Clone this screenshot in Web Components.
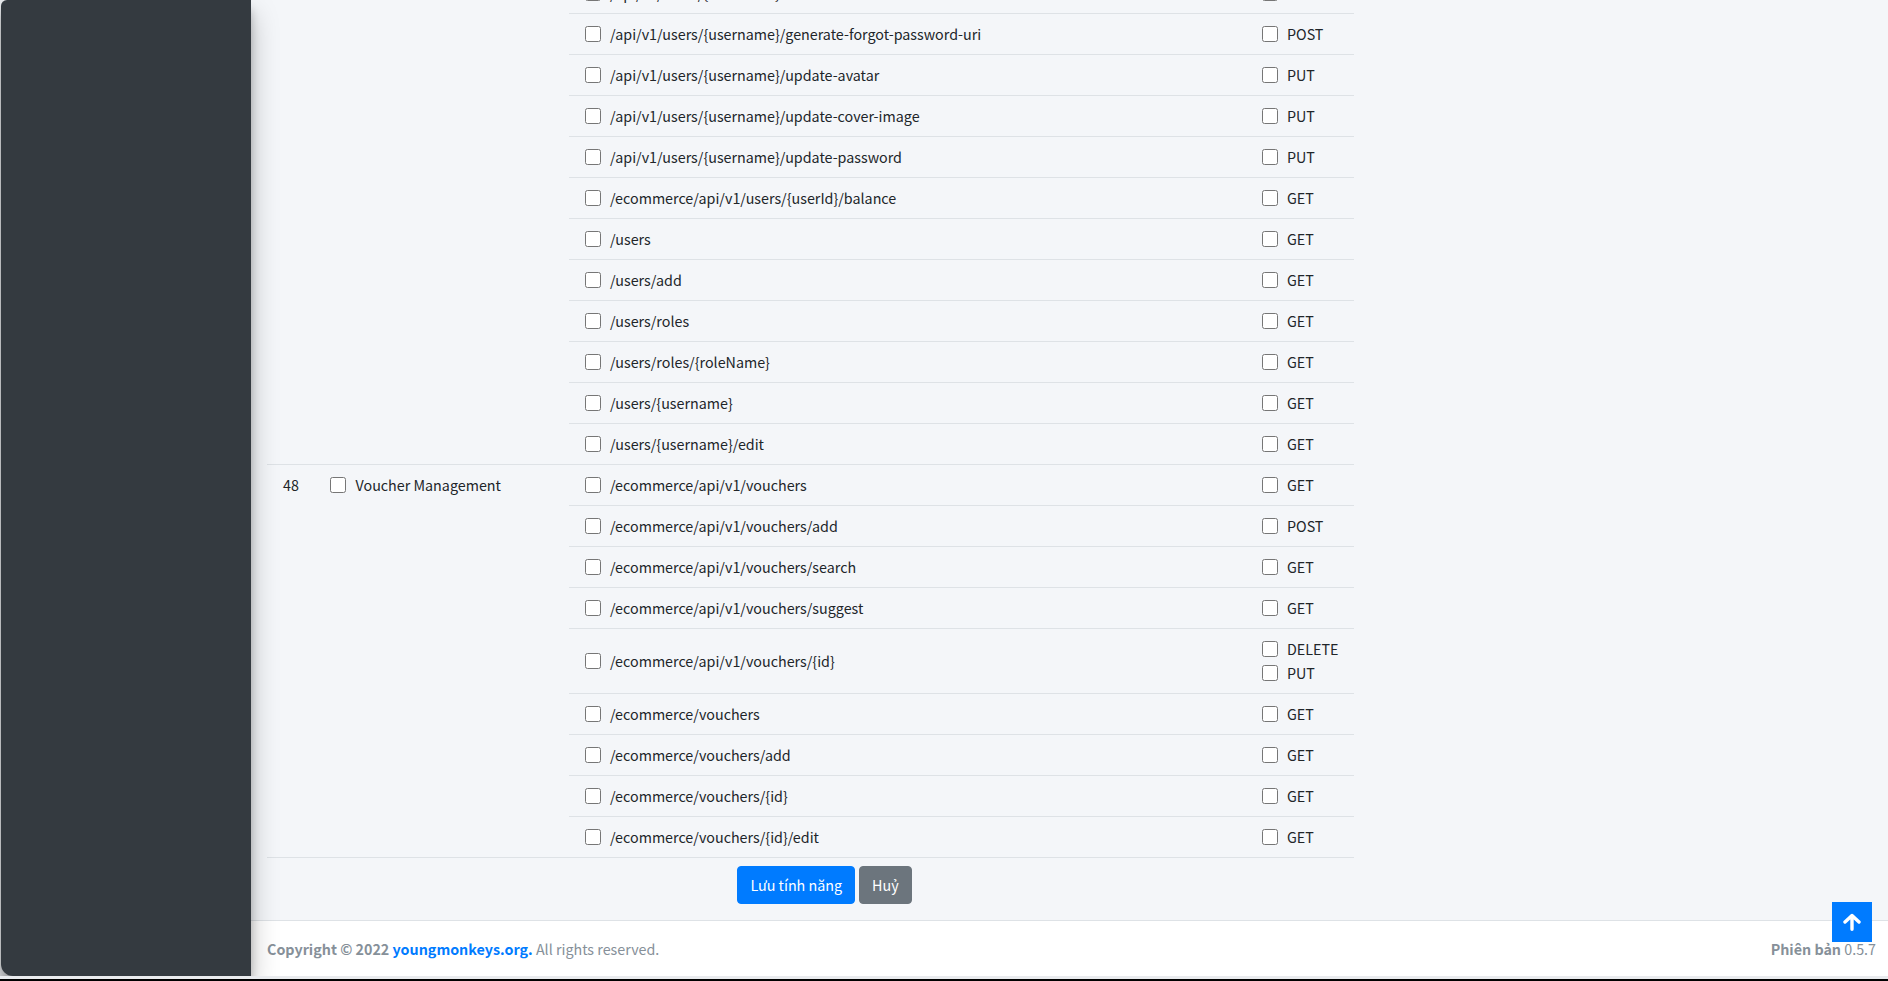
<!DOCTYPE html>
<html>
<head>
<meta charset="utf-8">
<title>Features</title>
<style>
  html, body { margin: 0; height: 100%; overflow: hidden; background: #000; }
  body { font-family: "Noto Sans CJK SC", "Noto Sans", sans-serif; font-size: 14.3px; color: #212529; }
</style>
</head>
<body>
<admin-shell>
  <feature-table></feature-table>
  <form-actions slot="actions"></form-actions>
  <page-footer slot="footer"></page-footer>
</admin-shell>
<back-to-top></back-to-top>

<script>
const checkboxCss = `
  .box {
    flex: none;
    width: 16px;
    height: 16px;
    box-sizing: border-box;
    background: #fff;
    border: 1px solid #767676;
    border-radius: 2.5px;
  }
`;

class AdminShell extends HTMLElement {
  constructor() {
    super();
    this.attachShadow({mode: 'open'});
    this.shadowRoot.innerHTML = `
      <style>
        :host {
          display: block;
          box-sizing: border-box;
          height: 979px;
          padding-bottom: 3px;
          background: #e9ebee;
        }
        .frame {
          display: flex;
          height: 100%;
          overflow: hidden;
          background: #e9ebee;
        }
        .sidebar {
          flex: none;
          width: 250px;
          margin-left: 1px;
          background: #343a40;
          border-bottom-left-radius: 12px;
          border-top-left-radius: 6px;
          box-shadow: 0 14px 28px rgba(0,0,0,.25), 0 10px 10px rgba(0,0,0,.22);
          z-index: 2;
        }
        .main {
          flex: 1;
          min-width: 0;
          display: flex;
          flex-direction: column;
          background: #f4f6f9;
        }
        .content {
          flex: 1;
          min-height: 0;
          overflow: hidden;
          padding: 0 16px;
          display: flex;
          flex-direction: column;
        }
      </style>
      <div class="frame">
        <div class="sidebar"></div>
        <div class="main">
          <div class="content">
            <slot></slot>
            <slot name="actions"></slot>
          </div>
          <slot name="footer"></slot>
        </div>
      </div>
    `;
  }
}

class FeatureTable extends HTMLElement {
  constructor() {
    super();
    this.attachShadow({mode: 'open'});
    this.shadowRoot.innerHTML = `
      <style>
        :host {
          display: block;
          width: 1087px;
          margin-top: -27px;
        }
      </style>
      <slot></slot>
    `;
  }
}

class FeatureRow extends HTMLElement {
  constructor() {
    super();
    this.attachShadow({mode: 'open'});
    this.shadowRoot.innerHTML = `
      <style>
        ${checkboxCss}
        :host {
          display: grid;
          grid-template-columns: 63px 239px 1fr;
          border-bottom: 1px solid #dee2e6;
        }
        .num { padding: 8px 0 0 16px; line-height: 24px; }
        .name { display: flex; align-items: center; gap: 9.5px; padding-top: 8px; line-height: 24px; height: 24px; }
      </style>
      <div class="num"></div>
      <div class="name"></div>
      <div class="uris"><slot></slot></div>
    `;
  }

  connectedCallback() {
    const name = this.getAttribute('name');
    if (!name) return;
    this.shadowRoot.querySelector('.num').textContent = this.getAttribute('num');
    this.shadowRoot.querySelector('.name').innerHTML = `<span class="box"></span><span>${name}</span>`;
  }
}

class UriRow extends HTMLElement {
  constructor() {
    super();
    this.attachShadow({mode: 'open'});
    this.shadowRoot.innerHTML = `
      <style>
        ${checkboxCss}
        :host {
          display: grid;
          grid-template-columns: 677px 1fr;
          align-items: center;
          padding: 8px 0 8px 16px;
          border-bottom: 1px solid #dee2e6;
        }
        :host(:last-child) { border-bottom: none; }
        .item { display: flex; align-items: center; gap: 9px; line-height: 24px; height: 24px; }
      </style>
      <div class="item"><span class="box"></span><span class="uri"></span></div>
      <div class="methods"></div>
    `;
  }

  connectedCallback() {
    this.shadowRoot.querySelector('.uri').textContent = this.getAttribute('uri');
    const methods = this.shadowRoot.querySelector('.methods');
    for (const m of this.getAttribute('methods').split(',')) {
      const el = document.createElement('div');
      el.className = 'item';
      el.innerHTML = `<span class="box"></span><span>${m}</span>`;
      methods.append(el);
    }
  }
}

class FormActions extends HTMLElement {
  constructor() {
    super();
    this.attachShadow({mode: 'open'});
    this.shadowRoot.innerHTML = `
      <style>
        :host {
          display: flex;
          justify-content: center;
          gap: 4px;
          box-sizing: border-box;
          width: 1087px;
          padding: 8px 0 16px 28px;
        }
        button {
          font: inherit;
          height: 38px;
          color: #fff;
          border: 1px solid;
          border-radius: 4px;
          padding: 0 12px;
          line-height: 24px;
        }
        .save { background: #007bff; border-color: #007bff; }
        .cancel { background: #6c757d; border-color: #6c757d; }
      </style>
      <button class="save">Lưu tính năng</button>
      <button class="cancel">Huỷ</button>
    `;
  }
}

class PageFooter extends HTMLElement {
  constructor() {
    super();
    this.attachShadow({mode: 'open'});
    this.shadowRoot.innerHTML = `
      <style>
        :host {
          flex: none;
          display: flex;
          justify-content: space-between;
          align-items: center;
          height: 55px;
          padding: 0 12px 0 16px;
          background: #fff;
          border-top: 1px solid #dee2e6;
          color: #869099;
        }
        a { color: #007bff; text-decoration: none; }
      </style>
      <div><b>Copyright © 2022 <a href="#">youngmonkeys.org.</a></b> All rights reserved.</div>
      <div><b>Phiên bản</b> 0.5.7</div>
    `;
  }
}

class BackToTop extends HTMLElement {
  constructor() {
    super();
    this.attachShadow({mode: 'open'});
    this.shadowRoot.innerHTML = `
      <style>
        :host {
          position: fixed;
          left: 1832px;
          top: 902px;
          width: 40px;
          height: 40px;
          background: #007bff;
          display: flex;
          align-items: center;
          justify-content: center;
        }
      </style>
      <svg width="18" height="18" viewBox="0 0 18 18" fill="none" stroke="#fff" stroke-width="3.4" stroke-linecap="round" stroke-linejoin="round">
        <path d="M9 16.3V2.5M2 9l7-6.5L16 9"/>
      </svg>
    `;
  }
}

customElements.define('admin-shell', AdminShell);
customElements.define('feature-table', FeatureTable);
customElements.define('feature-row', FeatureRow);
customElements.define('uri-row', UriRow);
customElements.define('form-actions', FormActions);
customElements.define('page-footer', PageFooter);
customElements.define('back-to-top', BackToTop);

// rows of the two visible groups
const table = document.querySelector('feature-table');
const groups = [
  {uris: [
    ['/api/v1/users/{username}', 'GET'],
    ['/api/v1/users/{username}/generate-forgot-password-uri', 'POST'],
    ['/api/v1/users/{username}/update-avatar', 'PUT'],
    ['/api/v1/users/{username}/update-cover-image', 'PUT'],
    ['/api/v1/users/{username}/update-password', 'PUT'],
    ['/ecommerce/api/v1/users/{userId}/balance', 'GET'],
    ['/users', 'GET'],
    ['/users/add', 'GET'],
    ['/users/roles', 'GET'],
    ['/users/roles/{roleName}', 'GET'],
    ['/users/{username}', 'GET'],
    ['/users/{username}/edit', 'GET'],
  ]},
  {num: '48', name: 'Voucher Management', uris: [
    ['/ecommerce/api/v1/vouchers', 'GET'],
    ['/ecommerce/api/v1/vouchers/add', 'POST'],
    ['/ecommerce/api/v1/vouchers/search', 'GET'],
    ['/ecommerce/api/v1/vouchers/suggest', 'GET'],
    ['/ecommerce/api/v1/vouchers/{id}', 'DELETE,PUT'],
    ['/ecommerce/vouchers', 'GET'],
    ['/ecommerce/vouchers/add', 'GET'],
    ['/ecommerce/vouchers/{id}', 'GET'],
    ['/ecommerce/vouchers/{id}/edit', 'GET'],
  ]},
];
for (const g of groups) {
  const row = document.createElement('feature-row');
  if (g.name) {
    row.setAttribute('num', g.num);
    row.setAttribute('name', g.name);
  }
  for (const [uri, methods] of g.uris) {
    const u = document.createElement('uri-row');
    u.setAttribute('uri', uri);
    u.setAttribute('methods', methods);
    row.append(u);
  }
  table.append(row);
}
</script>
</body>
</html>
